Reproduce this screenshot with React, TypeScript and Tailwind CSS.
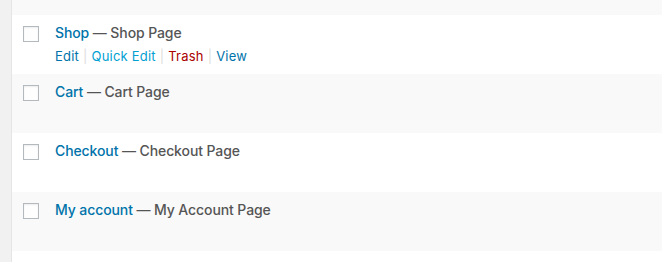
import React from "react";

type Row = {
  title: string;
  state: string;
  actions?: boolean;
  alt: boolean;
};

const rows: Row[] = [
  { title: "Shop", state: "Shop Page", actions: true, alt: false },
  { title: "Cart", state: "Cart Page", alt: true },
  { title: "Checkout", state: "Checkout Page", alt: false },
  { title: "My account", state: "My Account Page", alt: true },
];

const Sep = () => <span className="text-[#ddd] px-[4px]">|</span>;

const App = () => {
  return (
    <div
      className="flex w-[662px] h-[262px] overflow-hidden bg-[#f1f1f1]"
      style={{ fontFamily: "Inter, 'Open Sans', sans-serif" }}
    >
      {/* admin gutter */}
      <div className="w-[11px] shrink-0" />

      {/* list table */}
      <div className="flex-1 flex flex-col bg-white border-l border-[#e5e5e5]">
        <div className="h-[15px] bg-[#f9f9f9] shrink-0" />
        {rows.map((row) => (
          <div
            key={row.title}
            className={`flex h-[59px] shrink-0 ${row.alt ? "bg-[#f9f9f9]" : "bg-white"}`}
          >
            <div className="w-[43px] shrink-0 pl-[11px] pt-[11px]">
              <div className="w-4 h-4 border border-[#b4b9be] bg-[#fefefe] shadow-[inset_0_1px_2px_rgba(0,0,0,0.07)]" />
            </div>
            <div className="pt-[8px]">
              <div className="text-[14px] leading-[20px] font-medium text-[#555] tracking-[-0.1px]">
                <span className="text-[#0073aa]">{row.title}</span> — {row.state}
              </div>
              {row.actions && (
                <div className="mt-[3px] text-[13px] leading-[20px] text-[#0073aa] tracking-[0.2px]">
                  <span>Edit</span>
                  <Sep />
                  <span className="text-[#00a0d2]">Quick Edit</span>
                  <Sep />
                  <span className="text-[#a00]">Trash</span>
                  <Sep />
                  <span>View</span>
                </div>
              )}
            </div>
          </div>
        ))}
        <div className="flex-1 bg-white" />
      </div>
    </div>
  );
};

export default App;
